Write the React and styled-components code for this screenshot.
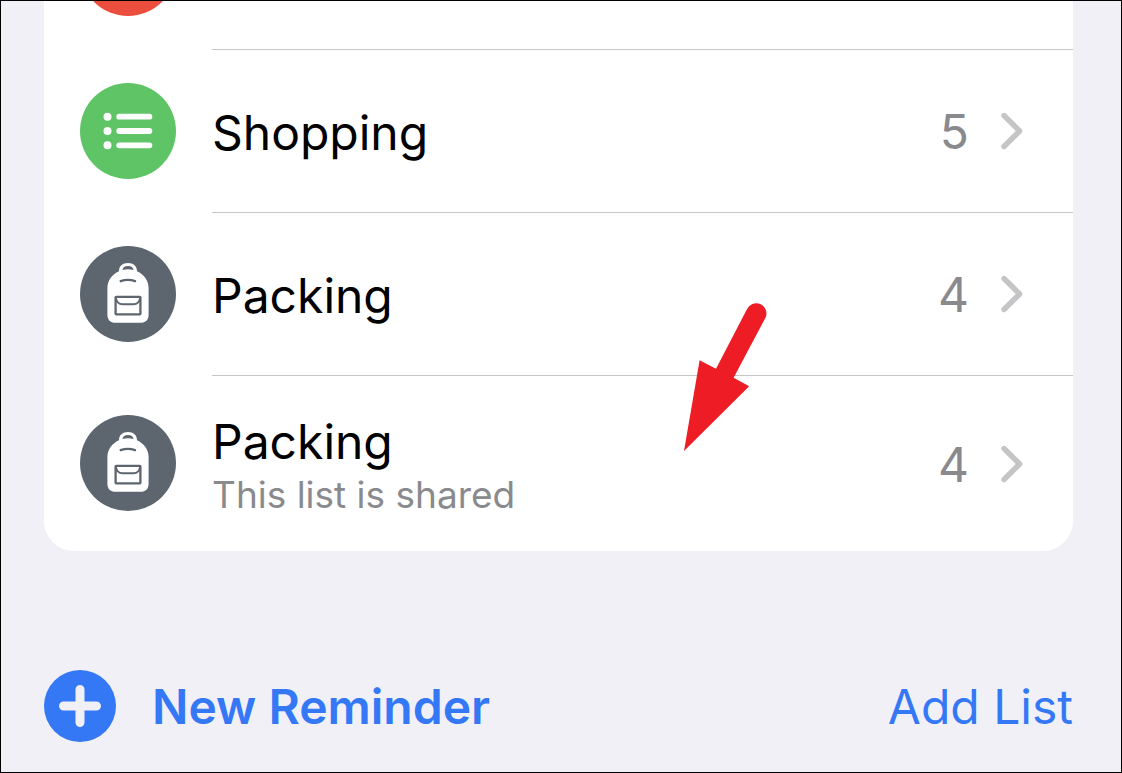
import React from "react";
import styled, { createGlobalStyle } from "styled-components";

const GlobalStyle = createGlobalStyle`
  * { box-sizing: border-box; }
  body { margin: 0; background: #f1f0f6; }
  button { margin: 0; padding: 0; border: 0; background: none; font: inherit; cursor: pointer; }
`;

const Page = styled.main`
  position: relative;
  display: flex;
  flex-direction: column;
  min-height: 100vh;
  padding: 0 48px 30px 43px;
  overflow: hidden;
  border: 1px solid #000;
  background: #f1f0f6;
  color: #000;
  font-family: Inter, "Liberation Sans", sans-serif;
`;

/* The card is scrolled up, so its first row is partly out of view. */
const Card = styled.ul`
  margin: -114px 0 0;
  padding: 0;
  list-style: none;
  overflow: hidden;
  border-radius: 30px;
  background: #fff;
`;

const Item = styled.li`
  display: flex;
  min-height: ${(p) => (p.$tall ? 175 : 163)}px;
`;

const Row = styled.button`
  display: flex;
  flex: 1;
  align-items: stretch;
  gap: 36px;
  padding: 0 0 0 36px;
  color: inherit;
  text-align: left;
`;

const Badge = styled.svg`
  flex: none;
  align-self: center;
  width: 96px;
  height: 96px;
  margin-bottom: 2px;
  border-radius: 50%;
  background: ${(p) => p.$color};
`;

const Body = styled.span`
  display: flex;
  flex: 1;
  align-items: center;
  padding-right: 50px;
  border-bottom: ${(p) => (p.$last ? 0 : 1)}px solid #c6c6c8;
`;

const Labels = styled.span`
  display: flex;
  flex: 1;
  flex-direction: column;
  padding-top: 4px;
`;

const Title = styled.span`
  font-size: 48px;
  line-height: 58px;
`;

const Note = styled.span`
  color: #8a8a8e;
  font-size: 37px;
  line-height: 48px;
`;

const Count = styled.span`
  margin-right: 32px;
  padding-top: 2px;
  color: #8a8a8e;
  font-size: 48px;
  line-height: 58px;
`;

const Chevron = styled.svg`
  flex: none;
  width: 22px;
  height: 38px;
`;

const Toolbar = styled.footer`
  display: flex;
  align-items: center;
  justify-content: space-between;
  margin-top: 119px;
`;

const Action = styled.button`
  display: flex;
  align-items: center;
  gap: 36px;
  color: #3478f6;
  font-size: 48px;
  font-weight: ${(p) => (p.$strong ? 600 : 400)};
  line-height: 60px;
`;

const ActionLabel = styled.span`
  padding-top: 2px;
`;

const PlusIcon = styled.svg`
  width: 72px;
  height: 72px;
`;

const Pointer = styled.svg`
  position: absolute;
  left: 61%;
  top: 301px;
  width: 84px;
  height: 150px;
  pointer-events: none;
`;

function ListIcon() {
  return (
    <Badge $color="#5ec466" viewBox="0 0 96 96" aria-hidden="true">
      {[33.7, 48, 62.3].map((y) => (
        <g key={y}>
          <circle cx="27.5" cy={y} r="4" fill="#fff" />
          <path d={`M39.2 ${y}H69.4`} stroke="#fff" strokeWidth="5.8" strokeLinecap="round" />
        </g>
      ))}
    </Badge>
  );
}

function BackpackIcon() {
  return (
    <Badge $color="#5d666f" viewBox="0 0 96 96" fill="none" aria-hidden="true">
      <path
        d="M39 25.2C39 20 42.6 17 48 17S57 20 57 25.2C64 28.5 68.6 34.5 68.6 42V68.5C68.6 74 65.8 76.8 60.3 76.8H35.7C30.2 76.8 27.4 74 27.4 68.5V42C27.4 34.5 32 28.5 39 25.2Z"
        fill="#fff"
      />
      <path d="M42.5 23.9C42.8 21.2 44.7 19.9 48 19.9S53.2 21.2 53.5 23.9C50 23 46 23 42.5 23.9Z" fill="#5d666f" />
      <path d="M40.7 35.2Q48 32.6 55 35.2" stroke="#5d666f" strokeWidth="2.4" strokeLinecap="round" />
      <rect x="35.6" y="50.8" width="24.8" height="17.6" rx="0.6" stroke="#5d666f" strokeWidth="2.3" />
      <path d="M35.8 51.8C36.6 56.4 38.6 58.2 42.5 58.2H53.5C57.4 58.2 59.4 56.4 60.2 51.8" stroke="#5d666f" strokeWidth="2" />
    </Badge>
  );
}

const lists = [
  { id: "shopping", title: "Shopping", count: 5, Icon: ListIcon },
  { id: "packing", title: "Packing", count: 4, Icon: BackpackIcon },
  { id: "packing-shared", title: "Packing", note: "This list is shared", count: 4, Icon: BackpackIcon },
];

export default function App() {
  return (
    <>
      <GlobalStyle />
      <Page>
        <Card>
          <Item>
            <Row as="div">
              <Badge $color="#eb4e3d" viewBox="0 0 96 96" aria-hidden="true" />
              <Body />
            </Row>
          </Item>
          {lists.map(({ id, title, note, count, Icon }, i) => (
            <Item key={id} $tall={Boolean(note)}>
              <Row type="button">
                <Icon />
                <Body $last={i === lists.length - 1}>
                  <Labels>
                    <Title>{title}</Title>
                    {note && <Note>{note}</Note>}
                  </Labels>
                  <Count>{count}</Count>
                  <Chevron viewBox="0 0 22 38" fill="none" aria-hidden="true">
                    <path d="M3 3.5 18.6 19 3 34.5" stroke="#c5c5c7" strokeWidth="5.4" strokeLinecap="round" strokeLinejoin="round" />
                  </Chevron>
                </Body>
              </Row>
            </Item>
          ))}
        </Card>
        <Toolbar>
          <Action type="button" $strong>
            <PlusIcon viewBox="0 0 72 72" aria-hidden="true">
              <circle cx="36" cy="36" r="36" fill="#3478f6" />
              <path d="M36 19.5V52.5M19.5 36H52.5" stroke="#f1f0f6" strokeWidth="9" strokeLinecap="round" />
            </PlusIcon>
            <ActionLabel>New Reminder</ActionLabel>
          </Action>
          <Action type="button">
            <ActionLabel>Add List</ActionLabel>
          </Action>
        </Toolbar>
        <Pointer viewBox="0 0 84 150" aria-hidden="true">
          <path d="M0 149 15.6 58.2 32 66.8 62.8 7.4A10.2 10.2 0 0 1 81.6 15.6L49.6 75.8 65.2 84.3Z" fill="#ee1c25" />
        </Pointer>
      </Page>
    </>
  );
}
